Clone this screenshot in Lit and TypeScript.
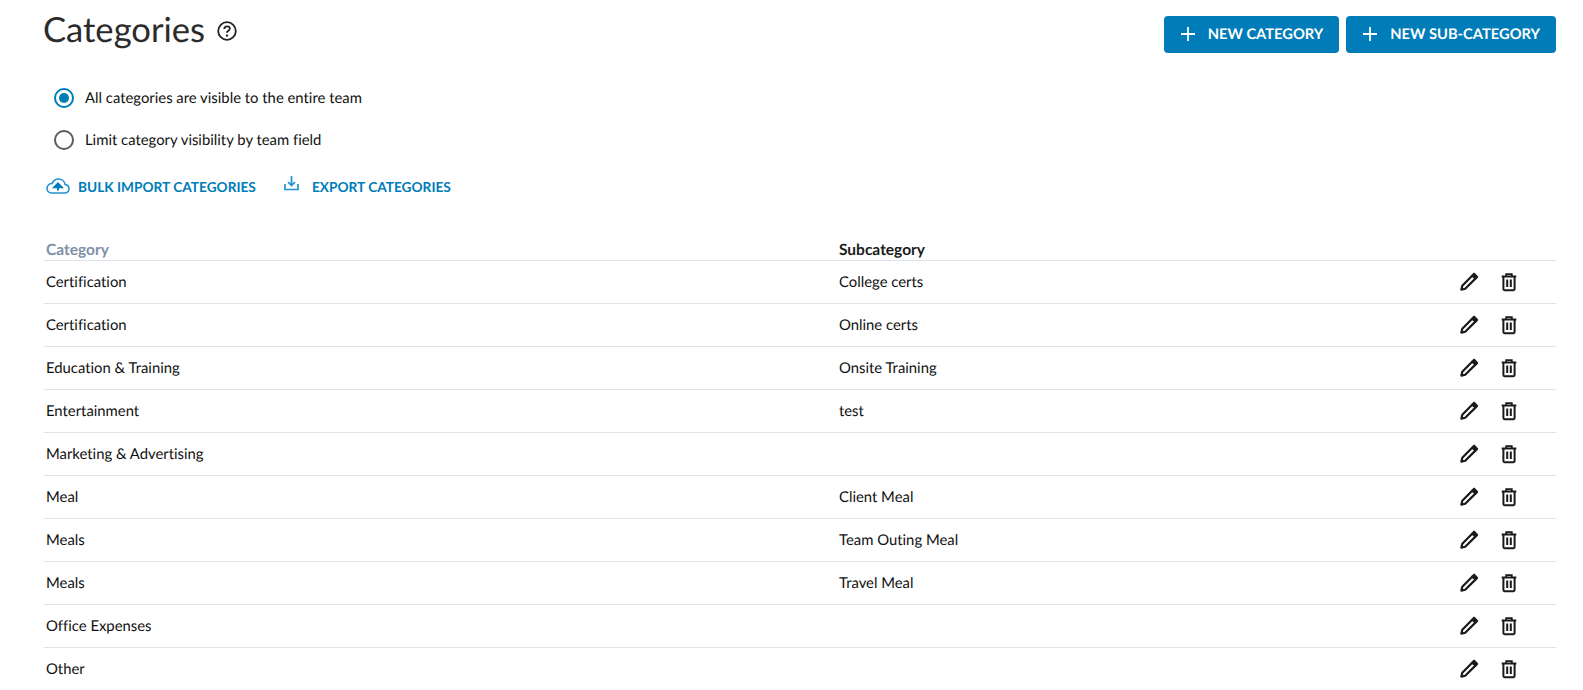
import { LitElement, html, css, svg } from "lit";
import { customElement } from "lit/decorators.js";

const rows: [string, string][] = [
  ["Certification", "College certs"],
  ["Certification", "Online certs"],
  ["Education & Training", "Onsite Training"],
  ["Entertainment", "test"],
  ["Marketing & Advertising", ""],
  ["Meal", "Client Meal"],
  ["Meals", "Team Outing Meal"],
  ["Meals", "Travel Meal"],
  ["Office Expenses", ""],
  ["Other", ""],
];

const plus = html`<svg class="plus" viewBox="0 0 14 14" width="14" height="14"><path d="M7 0v14M0 7h14" stroke="#fff" stroke-width="1.8" fill="none"/></svg>`;
const pencil = svg`<svg viewBox="0 0 20 20" width="20" height="20" fill="none"><path d="M2.4 17.6l.9-3.8L13.4 3.6l3 3L6.2 16.7z" stroke="#1a1a1a" stroke-width="2.2" stroke-linejoin="round"/><path d="M12.4 3l1.7-1.7c.6-.6 1.4-.6 2 0l2.6 2.6c.6.6.6 1.4 0 2l-1.7 1.7z" fill="#1a1a1a"/></svg>`;
const trash = svg`<svg viewBox="0 0 20 20" width="20" height="20" fill="none" stroke="#1a1a1a"><path d="M2.7 4.5h14.6" stroke-width="2"/><path d="M7.2 4.5V2.2h5.6v2.3" stroke-width="1.8"/><path d="M4.4 4.5v12.6c0 .7.4 1.1 1.1 1.1h9c.7 0 1.1-.4 1.1-1.1V4.5" stroke-width="2"/><path d="M8.2 7.5v7.6M11.8 7.5v7.6" stroke-width="2"/></svg>`;

@customElement("app-root")
export class AppRoot extends LitElement {
  static styles = css`
    :host {
      display: block;
      height: 690px;
      overflow: hidden;
      background: #fff;
      font-family: Lato, sans-serif;
      color: #1a1a1a;
      font-size: 14.85px;
      text-rendering: geometricPrecision;
      font-variant-ligatures: none;
    }
    .page { padding: 0 27px 0 44px; }
    .top {
      display: flex;
      justify-content: space-between;
      align-items: flex-start;
      height: 77px;
    }
    .title {
      display: flex;
      align-items: center;
      gap: 12px;
      margin: 11px 0 0 -1px;
      font-size: 34.6px;
      line-height: 38px;
      font-weight: 400;
      color: #2b2b2b;
    }
    .title svg { display: block; margin-top: 2px; }
    .buttons { display: flex; gap: 7px; margin-top: 16px; }
    .btn {
      display: flex;
      align-items: center;
      gap: 13px;
      height: 37px;
      box-sizing: border-box;
      padding: 0 16px 1px 17px;
      background: #007cb8;
      color: #fff;
      border: 0;
      border-radius: 4px;
      font: 700 14.7px Lato, sans-serif;
      text-rendering: geometricPrecision;
    }
    .plus { display: block; }
    .radio {
      display: flex;
      align-items: center;
      gap: 11px;
      height: 42px;
      padding-left: 10px;
      color: #111;
    }
    .circle {
      box-sizing: border-box;
      width: 20px;
      height: 20px;
      border-radius: 50%;
      border: 2px solid #5c5c5c;
      display: flex;
      align-items: center;
      justify-content: center;
    }
    .circle.on { border-color: #007cb8; }
    .circle.on::after {
      content: "";
      width: 10px;
      height: 10px;
      border-radius: 50%;
      background: #007cb8;
    }
    .links {
      display: flex;
      align-items: center;
      height: 30px;
      margin-top: 10px;
      color: #007cb8;
      font-weight: 700;
      font-size: 13.7px;
    }
    .link { display: flex; align-items: center; }
    .link.one { gap: 8px; margin: 0 28px 0 2px; }
    .link.two { gap: 13px; }
    .link svg { display: block; }
    .link.two svg { margin-top: -6px; }
    table {
      width: 100%;
      border-collapse: collapse;
      table-layout: fixed;
      margin-top: 29px;
    }
    th {
      text-align: left;
      font-size: 15.5px;
      font-weight: 700;
      height: 30px;
      padding: 11px 0 0 2px;
      box-sizing: border-box;
      border-bottom: 1px solid #dfe4ec;
      vertical-align: middle;
    }
    th.cat { color: #7f8fa6; width: 793px; }
    th.act { width: 130px; }
    td {
      height: 43px;
      box-sizing: border-box;
      padding: 0 0 0 2px;
      border-bottom: 1px solid #dfe4ec;
      color: #111;
      vertical-align: middle;
    }
    .actions { display: flex; gap: 20px; justify-content: flex-end; padding-right: 37px; }
    .actions svg { display: block; }
  `;

  render() {
    return html`
      <div class="page">
        <div class="top">
          <h1 class="title">
            Categories
            <svg viewBox="0 0 20 20" width="20" height="20" fill="none">
              <circle cx="10" cy="10" r="8.8" stroke="#222" stroke-width="1.8" />
              <path d="M7.3 7.9c0-1.6 1.2-2.6 2.8-2.6s2.7 1 2.7 2.3c0 2.1-2.8 2.1-2.8 4.2" stroke="#222" stroke-width="1.8" />
              <circle cx="10" cy="14.6" r="1.2" fill="#222" />
            </svg>
          </h1>
          <div class="buttons">
            <button class="btn">${plus}NEW CATEGORY</button>
            <button class="btn">${plus}NEW SUB-CATEGORY</button>
          </div>
        </div>
        <div class="radio"><span class="circle on"></span>All categories are visible to the entire team</div>
        <div class="radio"><span class="circle"></span>Limit category visibility by team field</div>
        <div class="links">
          <div class="link one">
            <svg viewBox="0 0 24 16" width="24" height="16" fill="none">
              <path d="M6 15h12.5c2.6 0 4.5-1.8 4.5-4.2 0-2.2-1.6-3.9-3.8-4.2C18.6 3.4 15.8 1 12.5 1 9.6 1 7.2 2.8 6.2 5.4 3.2 5.6 1 7.8 1 10.4 1 13 3.2 15 6 15z" stroke="#1f93d0" stroke-width="1.6" />
              <path d="M12 12.5V8.6M8.3 9.2L12 5.4l3.7 3.8z" stroke="#007cb8" stroke-width="2" fill="#007cb8" />
            </svg>
            BULK IMPORT CATEGORIES
          </div>
          <div class="link two">
            <svg viewBox="0 0 15 15" width="15" height="15" fill="none" stroke="#1f93d0" stroke-width="1.7">
              <path d="M7.5 0v9M4 6l3.5 3.5L11 6" />
              <path d="M1 8v5.5h13V8" />
            </svg>
            EXPORT CATEGORIES
          </div>
        </div>
        <table>
          <thead>
            <tr><th class="cat">Category</th><th>Subcategory</th><th class="act"></th></tr>
          </thead>
          <tbody>
            ${rows.map(
              ([a, b]) => html`<tr>
                <td>${a}</td>
                <td>${b}</td>
                <td><div class="actions">${pencil}${trash}</div></td>
              </tr>`
            )}
          </tbody>
        </table>
      </div>
    `;
  }
}
